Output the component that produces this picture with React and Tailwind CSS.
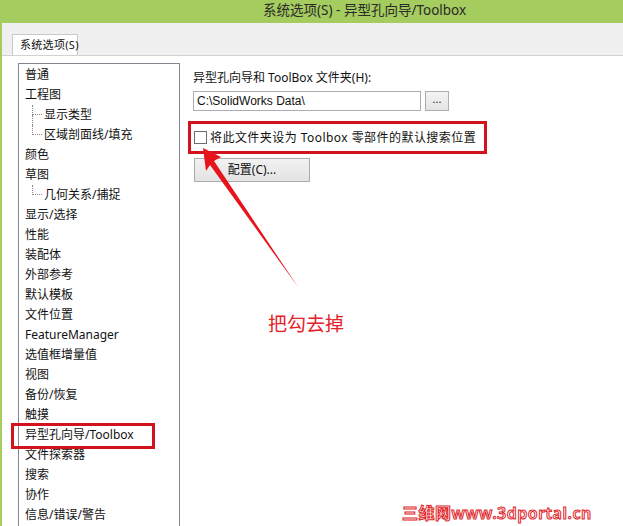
import React from 'react';

const FONT = "font-['Noto_Sans','Noto_Sans_CJK_SC',sans-serif]";

const treeItems = [
  { label: '普通' },
  { label: '工程图' },
  { label: '显示类型', child: true, more: true },
  { label: '区域剖面线/填充', child: true },
  { label: '颜色' },
  { label: '草图' },
  { label: '几何关系/捕捉', child: true },
  { label: '显示/选择' },
  { label: '性能' },
  { label: '装配体' },
  { label: '外部参考' },
  { label: '默认模板' },
  { label: '文件位置' },
  { label: 'FeatureManager' },
  { label: '选值框增量值' },
  { label: '视图' },
  { label: '备份/恢复' },
  { label: '触摸' },
  { label: '异型孔向导/Toolbox' },
  { label: '文件探索器' },
  { label: '搜索' },
  { label: '协作' },
  { label: '信息/错误/警告' },
];

const TreeRow = ({ label, child, more }) => (
  <div className="flex h-[20px] items-center text-[12px] leading-[20px] text-[#111]">
    {child ? (
      <>
        <div className="ml-[7px] flex h-[20px] w-[10px] flex-col">
          <div className="h-[10px] border-b border-l border-dotted border-[#8a8a8a]" />
          <div className={`h-[10px] ${more ? 'border-l border-dotted border-[#8a8a8a]' : ''}`} />
        </div>
        <span className="ml-[2px]">{label}</span>
      </>
    ) : (
      <span>{label}</span>
    )}
  </div>
);

export default function App() {
  return (
    <div className={`relative flex h-[526px] w-[623px] flex-col overflow-hidden bg-white ${FONT}`}>
      {/* Title bar */}
      <div className="flex h-[23px] shrink-0 items-center bg-[#a5cc5f] pb-[2px] pl-[263px] text-[13.5px] text-[#2a2a2a]">
        系统选项(S) - 异型孔向导/Toolbox
      </div>

      <div className="flex flex-1 flex-col border-l-2 border-[#a5cc5f]">
        {/* Tab strip */}
        <div className="flex h-[32px] shrink-0 items-end bg-[#f0f0f0] pl-[10px]">
          <div className="flex h-[21px] w-[66px] items-center whitespace-nowrap border border-b-0 border-[#c9c9c9] bg-white pl-[7px] text-[11px] tracking-[0.3px] text-[#111]">
            系统选项(S)
          </div>
        </div>

        {/* Tab page */}
        <div className="flex flex-1 overflow-hidden border-t border-[#d2d2d2] bg-white">
          {/* Tree list */}
          <div className="ml-[16px] mt-[7px] w-[162px] shrink-0 border border-b-0 border-[#828790] pl-[6px] pt-[1px]">
            {treeItems.map((it) => (
              <TreeRow key={it.label} {...it} />
            ))}
          </div>

          {/* Right panel */}
          <div className="ml-[13px] mt-[14px] flex flex-col">
            <div className="h-[16px] text-[12px] leading-[16px] text-[#111]">
              异型孔向导和 ToolBox 文件夹(H):
            </div>
            <div className="mt-[5px] flex gap-[4px]">
              <div className="flex h-[20px] w-[228px] items-center border border-[#abadb3] bg-white pl-[3px] font-['Liberation_Sans',sans-serif] text-[12px] text-[#111]">
                C:\SolidWorks Data\
              </div>
              <div className="flex h-[20px] w-[24px] items-center justify-center border border-[#adadad] bg-gradient-to-b from-[#f4f4f4] to-[#e4e4e4] pb-[4px] text-[11px] text-[#222]">
                ...
              </div>
            </div>
            <div className="-ml-[5px] mt-[10px] flex h-[33px] w-[299px] items-center border-[3px] border-[#d2121c] pl-[3px]">
              <div className="h-[13px] w-[13px] border border-[#6d6d6d] bg-white" />
              <span className="ml-[3px] text-[12px] tracking-[0.45px] text-[#111]">
                将此文件夹设为 Toolbox 零部件的默认搜索位置
              </span>
            </div>
            <div className="ml-[1px] mt-[4px] flex h-[24px] w-[116px] items-center justify-center border border-[#acacac] bg-gradient-to-b from-[#f2f2f2] to-[#e3e3e3] text-[12px] text-[#111]">
              配置(C)...
            </div>
          </div>
        </div>
      </div>

      {/* Annotation: highlight around tree item */}
      <div className="absolute left-[11px] top-[423px] h-[26px] w-[144px] border-[3px] border-[#d2121c]" />

      {/* Annotation: arrow */}
      <svg className="absolute left-0 top-0" width="623" height="526" viewBox="0 0 623 526">
        <polygon
          points="203,148 221,157 214,161 298,287 210,165 206,171"
          fill="#e8141c"
        />
      </svg>

      {/* Annotation text */}
      <div className="absolute left-[268px] top-[313px] text-[19px] leading-[22px] text-[#e5222a]">
        把勾去掉
      </div>

      {/* Watermark */}
      <div className="absolute left-[402px] top-[503px] text-[16px] font-semibold leading-[20px] tracking-[0.5px] text-white [-webkit-text-stroke:1px_#e0262b]">
        三维网www.3dportal.cn
      </div>
    </div>
  );
}
